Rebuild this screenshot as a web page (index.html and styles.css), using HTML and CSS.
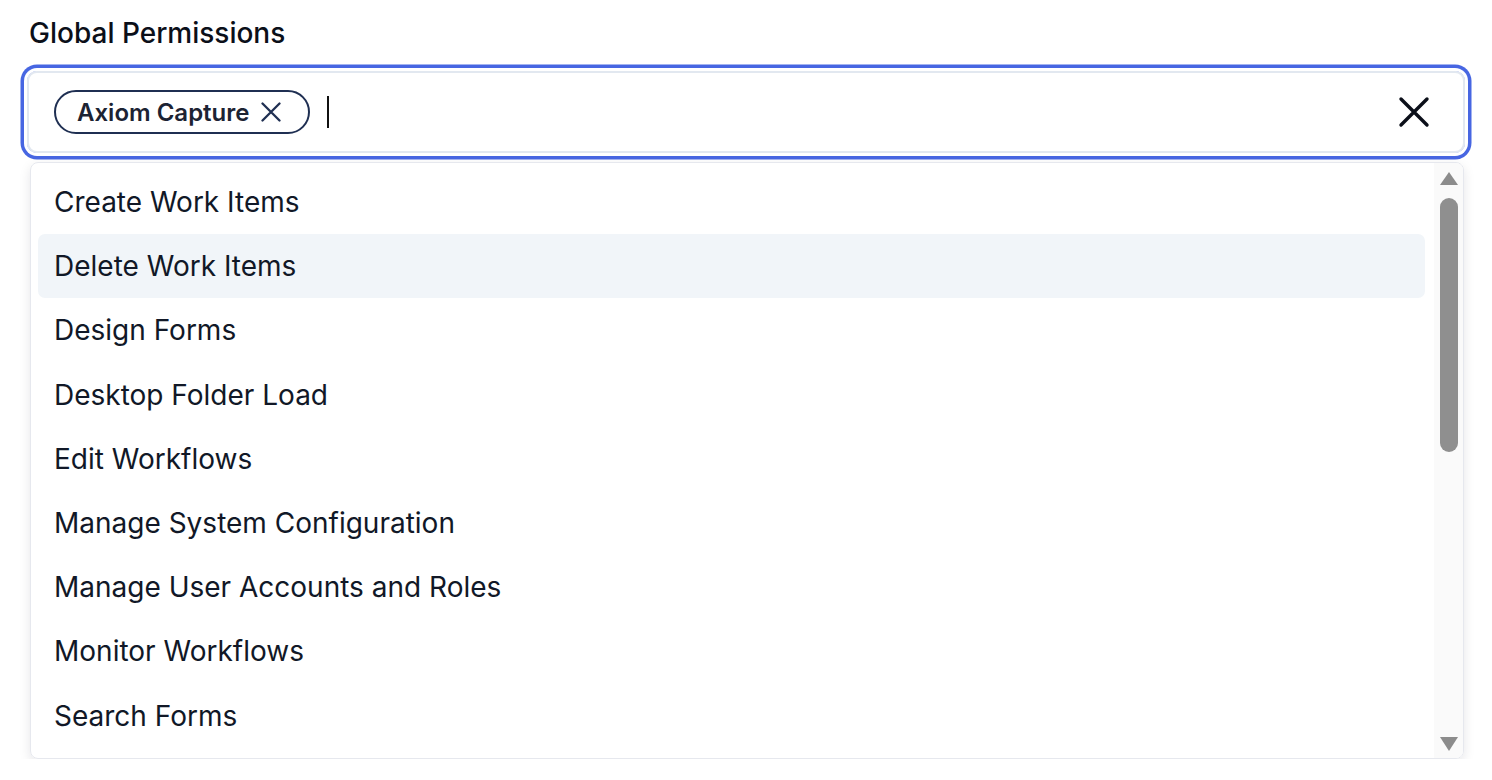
FILE: index.html
```html
<!DOCTYPE html>
<html lang="en">
<head>
  <meta charset="UTF-8">
  <title>Global Permissions</title>
  <link rel="stylesheet" href="styles.css">
</head>
<body>

  <div class="field">
    <label class="field-label" for="perm-search">Global Permissions</label>

    <div class="combo">
      <div class="combo-input">
        <span class="chip">
          Axiom Capture
          <svg class="chip-x" viewBox="0 0 20 20" width="20" height="20">
            <path d="M1.5 1.5 L18.5 18.5 M18.5 1.5 L1.5 18.5" stroke="currentColor" stroke-width="2.3" stroke-linecap="round" fill="none"/>
          </svg>
        </span>
        <span class="caret"></span>
        <input id="perm-search" class="search" type="text">
        <button class="clear" title="Clear">
          <svg viewBox="0 0 32 32" width="32" height="32">
            <path d="M3 3 L29 29 M29 3 L3 29" stroke="currentColor" stroke-width="3.4" stroke-linecap="round" fill="none"/>
          </svg>
        </button>
      </div>

      <div class="dropdown">
        <ul class="options">
          <li>Create Work Items</li>
          <li class="active">Delete Work Items</li>
          <li>Design Forms</li>
          <li>Desktop Folder Load</li>
          <li>Edit Workflows</li>
          <li>Manage System Configuration</li>
          <li>Manage User Accounts and Roles</li>
          <li>Monitor Workflows</li>
          <li>Search Forms</li>
        </ul>
        <div class="scrollbar">
          <span class="arrow up"></span>
          <div class="track">
            <div class="thumb"></div>
          </div>
          <span class="arrow down"></span>
        </div>
      </div>
    </div>
  </div>

</body>
</html>
```

FILE: styles.css
```css
body {
  font-family: Inter, "Noto Sans", Arial, sans-serif;
  margin: 0;
  background-color: #ffffff;
  color: #0f172a;
}

.field {
  padding: 17px 27px 0 27px;
  width: 1438px;
}

.field-label {
  display: block;
  font-size: 28px;
  font-weight: 500;
  line-height: 32px;
  margin-left: 2px;
  margin-bottom: 22px;
  color: #0b0f19;
}

.combo-input {
  display: flex;
  align-items: center;
  height: 78px;
  border: 2px solid #e2e8f0;
  border-radius: 10px;
  box-shadow: 0 0 0 3px #ffffff, 0 0 0 6.5px #4766e2;
  padding: 0 33px 0 25px;
}

.chip {
  display: inline-flex;
  align-items: center;
  gap: 12px;
  height: 44px;
  box-sizing: border-box;
  padding: 0 27px 0 21px;
  border: 2px solid #1f2f52;
  border-radius: 22px;
  font-size: 24px;
  font-weight: 600;
  color: #1c2333;
}

.chip-x {
  color: #1f2f52;
}

.caret {
  width: 2px;
  height: 32px;
  background-color: #111;
  margin-left: 17px;
}

.search {
  flex: 1;
  border: none;
  outline: none;
  font-size: 24px;
  background: none;
}

.clear {
  border: none;
  background: none;
  padding: 0;
  color: #0b0f19;
  display: flex;
  cursor: pointer;
}

.dropdown {
  display: flex;
  margin: 9px 0 0 3px;
  width: 1434px;
  height: 597px;
  box-sizing: border-box;
  border: 1px solid #e6e8ee;
  border-radius: 8px;
  box-shadow: 0 4px 12px rgba(15, 23, 42, 0.10);
  overflow: hidden;
}

.options {
  flex: 1;
  list-style: none;
  margin: 0;
  padding: 7px 8px 0 7px;
}

.options li {
  height: 64.2px;
  line-height: 64.2px;
  padding-left: 16px;
  font-size: 28px;
  border-radius: 7px;
  color: #111827;
}

.options li.active {
  background-color: #f1f5f9;
}

.scrollbar {
  width: 29px;
  background-color: #fafafa;
  display: flex;
  flex-direction: column;
  align-items: center;
  padding: 9px 0 7px 0;
  margin-left: 1px;
}

.arrow {
  width: 0;
  height: 0;
  border-left: 9px solid transparent;
  border-right: 9px solid transparent;
}

.arrow.up {
  border-bottom: 13px solid #8c8c8c;
}

.arrow.down {
  border-top: 14px solid #8c8c8c;
}

.track {
  flex: 1;
  width: 18px;
  padding-top: 13px;
}

.thumb {
  height: 254px;
  border-radius: 9px;
  background-color: #8f8f8f;
}
```
